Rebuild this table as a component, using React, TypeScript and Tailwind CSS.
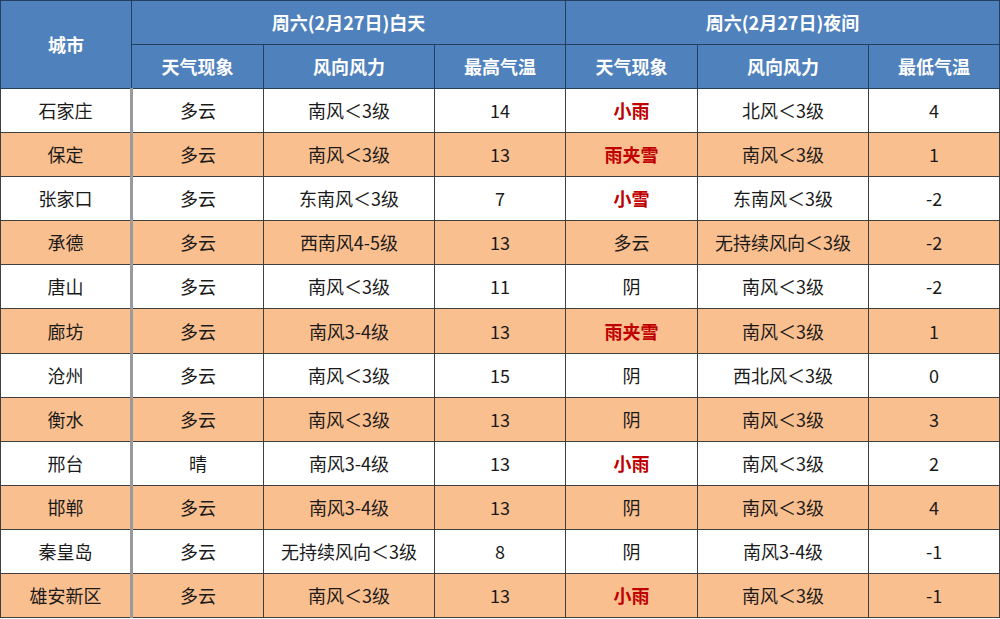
const rows = [
  ['石家庄', '多云', '南风＜3级', '14', '小雨', '北风＜3级', '4'],
  ['保定', '多云', '南风＜3级', '13', '雨夹雪', '南风＜3级', '1'],
  ['张家口', '多云', '东南风＜3级', '7', '小雪', '东南风＜3级', '-2'],
  ['承德', '多云', '西南风4-5级', '13', '多云', '无持续风向＜3级', '-2'],
  ['唐山', '多云', '南风＜3级', '11', '阴', '南风＜3级', '-2'],
  ['廊坊', '多云', '南风3-4级', '13', '雨夹雪', '南风＜3级', '1'],
  ['沧州', '多云', '南风＜3级', '15', '阴', '西北风＜3级', '0'],
  ['衡水', '多云', '南风＜3级', '13', '阴', '南风＜3级', '3'],
  ['邢台', '晴', '南风3-4级', '13', '小雨', '南风＜3级', '2'],
  ['邯郸', '多云', '南风3-4级', '13', '阴', '南风＜3级', '4'],
  ['秦皇岛', '多云', '无持续风向＜3级', '8', '阴', '南风3-4级', '-1'],
  ['雄安新区', '多云', '南风＜3级', '13', '小雨', '南风＜3级', '-1'],
];

const red = ['小雨', '雨夹雪', '小雪'];
const sub = ['天气现象', '风向风力', '最高气温', '天气现象', '风向风力', '最低气温'];

export default function App() {
  return (
    <div className="w-[1000px] h-[619px] bg-white overflow-hidden" style={{ fontFamily: '"Noto Sans CJK SC", "Noto Sans", sans-serif' }}>
      <table className="w-[999px] border-collapse table-fixed text-[18px] text-center">
        <colgroup>
          <col className="w-[131px]" />
          <col className="w-[132px]" />
          <col className="w-[171px]" />
          <col className="w-[131px]" />
          <col className="w-[132px]" />
          <col className="w-[171px]" />
          <col className="w-[131px]" />
        </colgroup>
        <thead className="bg-[#4f81bd] text-white font-bold">
          <tr className="h-[44px]">
            <th rowSpan={2} className="border border-[#243f60]">城市</th>
            <th colSpan={3} className="border border-[#243f60]">周六(2月27日)白天</th>
            <th colSpan={3} className="border border-[#243f60]">周六(2月27日)夜间</th>
          </tr>
          <tr className="h-[44px]">
            {sub.map((s, i) => (
              <th key={i} className="border border-[#243f60]">{s}</th>
            ))}
          </tr>
        </thead>
        <tbody className="text-[#1a1a1a]">
          {rows.map((r, i) => (
            <tr key={i} className={`h-[44.1px] ${i % 2 === 1 ? 'bg-[#fabf8f]' : 'bg-white'}`}>
              {r.map((c, j) => (
                <td
                  key={j}
                  className={`border border-[#3f3f3f] p-0 ${j === 0 ? 'border-r-[3px] border-r-[#9a9a9a]' : ''} ${
                    j === 4 && red.includes(c) ? 'text-[#c00000] font-bold' : ''
                  }`}
                >
                  {c}
                </td>
              ))}
            </tr>
          ))}
        </tbody>
      </table>
    </div>
  );
}
